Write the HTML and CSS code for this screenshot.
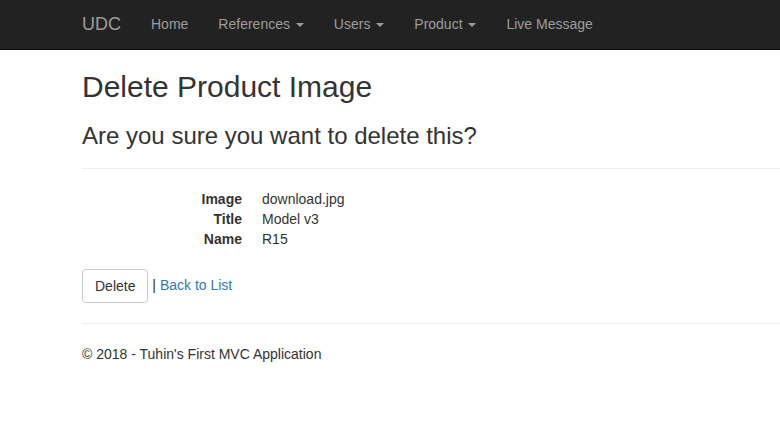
FILE: index.html
```html
<!DOCTYPE html>
<html>
<head>
<meta charset="utf-8">
<title>Delete Product Image</title>
<link rel="stylesheet" href="styles.css">
</head>
<body>
<nav class="navbar">
  <div class="nav-inner">
    <a class="brand" href="#">UDC</a>
    <ul class="nav">
      <li><a href="#">Home</a></li>
      <li><a href="#">References <span class="caret"></span></a></li>
      <li><a href="#">Users <span class="caret"></span></a></li>
      <li><a href="#">Product <span class="caret"></span></a></li>
      <li><a href="#">Live Message</a></li>
    </ul>
  </div>
</nav>
<div class="container">
  <h2>Delete Product Image</h2>
  <h3>Are you sure you want to delete this?</h3>
  <div>
    <hr class="rule-top">
    <dl class="dl-horizontal">
      <dt>Image</dt><dd>download.jpg</dd>
      <dt>Title</dt><dd>Model v3</dd>
      <dt>Name</dt><dd>R15</dd>
    </dl>
    <form class="form-actions">
      <button type="button" class="btn">Delete</button> |
      <a href="#" class="link">Back to List</a>
    </form>
  </div>
  <hr class="rule-bottom">
  <footer>
    <p>&copy; 2018 - Tuhin's First MVC Application</p>
  </footer>
</div>
</body>
</html>
```
FILE: styles.css
```css
* { box-sizing: border-box; }
html, body { margin: 0; padding: 0; }
body {
  font-family: "Liberation Sans", Arial, sans-serif;
  font-size: 14px;
  line-height: 1.428571;
  color: #333;
  background: #fff;
}
.navbar {
  height: 50px;
  background: #222;
  border-bottom: 1px solid #080808;
}
.nav-inner {
  display: flex;
  padding-left: 67px;
  height: 49px;
}
.brand {
  display: block;
  padding: 14px 15px 15px;
  font-size: 18px;
  line-height: 20px;
  color: #9d9d9d;
  text-decoration: none;
}
.nav {
  display: flex;
  list-style: none;
  margin: 0;
  padding: 0;
}
.nav a {
  display: block;
  padding: 14px 15px 15px;
  line-height: 20px;
  color: #9d9d9d;
  text-decoration: none;
}
.caret {
  display: inline-block;
  width: 0;
  height: 0;
  margin-left: 2px;
  vertical-align: middle;
  border-top: 4px solid;
  border-right: 4px solid transparent;
  border-left: 4px solid transparent;
}
.container {
  padding-left: 82px;
}
h2, h3 {
  font-weight: 500;
  line-height: 1.1;
  margin: 20px 0 10px;
}
h2 { font-size: 30px; }
h3 { font-size: 24px; }
hr {
  margin: 20px 0;
  border: 0;
  border-top: 1px solid #eee;
  height: 0;
}
.rule-top { margin-top: 19px; }
.rule-bottom { margin-top: 20px; margin-bottom: 21px; }
.dl-horizontal {
  display: grid;
  grid-template-columns: 160px 1fr;
  column-gap: 20px;
  margin: 0 0 20px;
  line-height: 20px;
}
.dl-horizontal dt {
  font-weight: 700;
  text-align: right;
}
.dl-horizontal dd { margin: 0; }
.form-actions { margin: 0; }
.btn {
  display: inline-block;
  padding: 6px 12px;
  font-family: inherit;
  font-size: 14px;
  line-height: 20px;
  color: #333;
  background: #fff;
  border: 1px solid #ccc;
  border-radius: 4px;
  vertical-align: middle;
}
.link {
  color: #337ab7;
  text-decoration: none;
}
footer p { margin: 0 0 10px; }
```
